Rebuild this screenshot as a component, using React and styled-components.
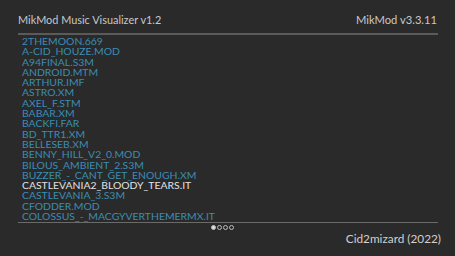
import React from "react"
import styled, { createGlobalStyle } from "styled-components"

const GlobalStyle = createGlobalStyle`
  html, body {
    margin: 0;
    padding: 0;
    background: #2a2a2a;
  }
  body {
    font-family: "Lato", "Liberation Sans", sans-serif;
  }
`

const Screen = styled.div`
  width: 455px;
  height: 256px;
  box-sizing: border-box;
  padding: 0 17px 0 18px;
  display: flex;
  flex-direction: column;
  background: #2a2a2a;
  overflow: hidden;
`
const Header = styled.div`
  height: 33px;
  display: flex;
  align-items: center;
  justify-content: space-between;
  padding-top: 6px;
  box-sizing: border-box;
  color: #c8c8c8;
`
const Title = styled.span`
  font-size: 10.9px;
`
const Version = styled.span`
  font-size: 11.2px;
  padding-right: 1px;
`
const Rule = styled.div`
  height: ${(p) => p.thick}px;
  background: ${(p) => p.color};
`
const List = styled.ul`
  list-style: none;
  margin: 0;
  padding: 1px 0 0 4px;
  height: 187px;
  box-sizing: border-box;
`
const Item = styled.li`
  height: 10.3px;
  line-height: 10.3px;
  font-size: 10.4px;
  white-space: nowrap;
  color: ${(p) => (p.active ? "#e2e2e2" : "#3b8db3")};
`
const Pager = styled.div`
  display: flex;
  justify-content: center;
  gap: 1px;
  padding-top: 2px;
  padding-right: 12px;
`
const Dot = styled.span`
  width: 3px;
  height: 3px;
  border-radius: 50%;
  border: 1px solid #bbb;
  background: ${(p) => (p.active ? "#ddd" : "transparent")};
`
const Footer = styled.div`
  text-align: right;
  padding-top: 1px;
  margin-right: -3px;
  font-size: 11.8px;
  color: #d0d0d0;
`

const files = [
  "2THEMOON.669",
  "A-CID_HOUZE.MOD",
  "A94FINAL.S3M",
  "ANDROID.MTM",
  "ARTHUR.IMF",
  "ASTRO.XM",
  "AXEL_F.STM",
  "BABAR.XM",
  "BACKFI.FAR",
  "BD_TTR1.XM",
  "BELLESEB.XM",
  "BENNY_HILL_V2_0.MOD",
  "BILOUS_AMBIENT_2.S3M",
  "BUZZER_-_CANT_GET_ENOUGH.XM",
  "CASTLEVANIA2_BLOODY_TEARS.IT",
  "CASTLEVANIA_3.S3M",
  "CFODDER.MOD",
  "COLOSSUS_-_MACGYVERTHEMERMX.IT",
]

const selected = 14

const App = () => (
  <>
    <GlobalStyle />
    <Screen>
      <Header>
        <Title>MikMod Music Visualizer v1.2</Title>
        <Version>MikMod v3.3.11</Version>
      </Header>
      <Rule thick={2} color="#5a5a5a" />
      <List>
        {files.map((f, i) => (
          <Item key={f} active={i === selected}>
            {f}
          </Item>
        ))}
      </List>
      <Rule thick={1} color="#6a6a6a" />
      <Pager>
        {[0, 1, 2, 3].map((i) => (
          <Dot key={i} active={i === 0} />
        ))}
      </Pager>
      <Footer>Cid2mizard (2022)</Footer>
    </Screen>
  </>
)

export default App
